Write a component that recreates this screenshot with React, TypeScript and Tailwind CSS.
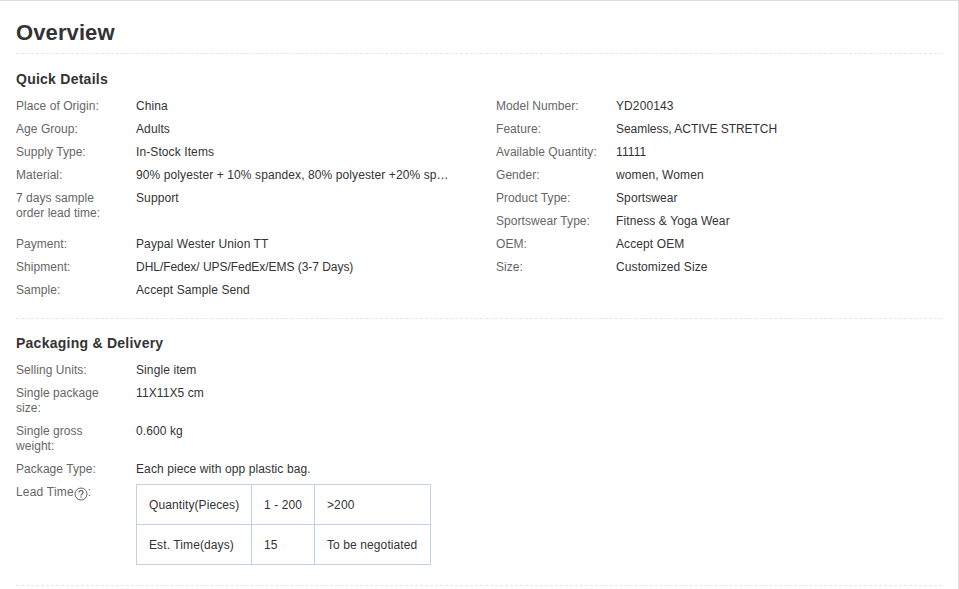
const quickLeft = [
  { label: "Place of Origin:", value: "China" },
  { label: "Age Group:", value: "Adults" },
  { label: "Supply Type:", value: "In-Stock Items" },
  {
    label: "Material:",
    value: "90% polyester + 10% spandex, 80% polyester +20% spandex",
  },
  { label: "7 days sample order lead time:", value: "Support", tall: true },
  { label: "Payment:", value: "Paypal Wester Union TT" },
  {
    label: "Shipment:",
    value: "DHL/Fedex/ UPS/FedEx/EMS (3-7 Days)",
    tight: true,
  },
  { label: "Sample:", value: "Accept Sample Send" },
];

const quickRight = [
  { label: "Model Number:", value: "YD200143" },
  { label: "Feature:", value: "Seamless, ACTIVE STRETCH", tight: true },
  { label: "Available Quantity:", value: "11111" },
  { label: "Gender:", value: "women, Women" },
  { label: "Product Type:", value: "Sportswear" },
  { label: "Sportswear Type:", value: "Fitness & Yoga Wear" },
  { label: "OEM:", value: "Accept OEM" },
  { label: "Size:", value: "Customized Size" },
];

const Row = (props: {
  label: string;
  value: string;
  tall?: boolean;
  tight?: boolean;
}) => (
  <div className={`flex ${props.tall ? "h-[46px]" : "h-[23px]"}`}>
    <div className="w-[120px] shrink-0 pr-4 tracking-[0.05px] text-[#666]">
      {props.label}
    </div>
    <div
      className={`w-[314px] truncate text-[#333] ${props.tight ? "tracking-[-0.04px]" : ""}`}
    >
      {props.value}
    </div>
  </div>
);

const PackRow = (props: { label: string; value: string }) => (
  <div className="flex pb-2">
    <div className="w-[120px] shrink-0 pr-4 tracking-[0.05px] text-[#666]">
      {props.label}
    </div>
    <div className="text-[#333]">{props.value}</div>
  </div>
);

const App = () => {
  return (
    <div className="h-[589px] w-[959px] overflow-hidden border-t border-r border-[#ddd] bg-white px-4 font-['Liberation_Sans',Arial,sans-serif] text-xs leading-[15px] tracking-[0.1px]">
      <div className="w-[926px]">
        <div className="border-b border-dashed border-[#e6e6e6] pt-[19px] pb-2">
          <h2 className="text-[22px] leading-[25px] font-bold tracking-[0.1px] text-[#333]">
            Overview
          </h2>
        </div>

        <div className="border-b border-dashed border-[#e6e6e6] pt-[17px] pb-3">
          <h3 className="mb-3 text-sm leading-4 font-bold tracking-[0.25px] text-[#333]">
            Quick Details
          </h3>
          <div className="flex">
            <div className="w-[480px]">
              {quickLeft.map((row) => (
                <Row key={row.label} {...row} />
              ))}
            </div>
            <div className="w-[446px]">
              {quickRight.map((row) => (
                <Row key={row.label} {...row} />
              ))}
            </div>
          </div>
        </div>

        <div className="border-b border-dashed border-[#e6e6e6] pt-4 pb-5">
          <h3 className="mb-3 text-sm leading-4 font-bold tracking-[0.25px] text-[#333]">
            Packaging &amp; Delivery
          </h3>
          <PackRow label="Selling Units:" value="Single item" />
          <PackRow label="Single package size:" value="11X11X5 cm" />
          <PackRow label="Single gross weight:" value="0.600 kg" />
          <PackRow
            label="Package Type:"
            value="Each piece with opp plastic bag."
          />
          <div className="flex">
            <div className="flex w-[120px] shrink-0 items-start tracking-[0.2px] text-[#666]">
              Lead Time
              <svg
                viewBox="0 0 14 14"
                className="mt-[2px] h-[14px] w-[14px] text-[#666]"
                fill="none"
              >
                <circle cx="7" cy="7" r="6" stroke="currentColor" />
                <path
                  d="M5 5.6c0-1.200.9-1.900 2-1.900s2 .7 2 1.700c0 1.500-2 1.500-2 3"
                  stroke="currentColor"
                  strokeWidth="1.300"
                />
                <path
                  d="M7 9.600v1.200"
                  stroke="currentColor"
                  strokeWidth="1.300"
                />
              </svg>
              :
            </div>
            <table className="-mt-px w-[295px] table-fixed border-collapse text-[#333]">
              <tbody>
                <tr className="h-10">
                  <td className="w-[115px] border border-[#c4d0e4] px-3 pt-px whitespace-nowrap">
                    Quantity(Pieces)
                  </td>
                  <td className="w-[63px] border border-[#c4d0e4] px-3 pt-px whitespace-nowrap">
                    1 - 200
                  </td>
                  <td className="border border-[#c4d0e4] px-3 pt-px">
                    &gt;200
                  </td>
                </tr>
                <tr className="h-10">
                  <td className="border border-[#c4d0e4] px-3 pt-px whitespace-nowrap">
                    Est. Time(days)
                  </td>
                  <td className="border border-[#c4d0e4] px-3 pt-px">15</td>
                  <td className="border border-[#c4d0e4] px-3 pt-px whitespace-nowrap">
                    To be negotiated
                  </td>
                </tr>
              </tbody>
            </table>
          </div>
        </div>
      </div>
    </div>
  );
};

export default App;
